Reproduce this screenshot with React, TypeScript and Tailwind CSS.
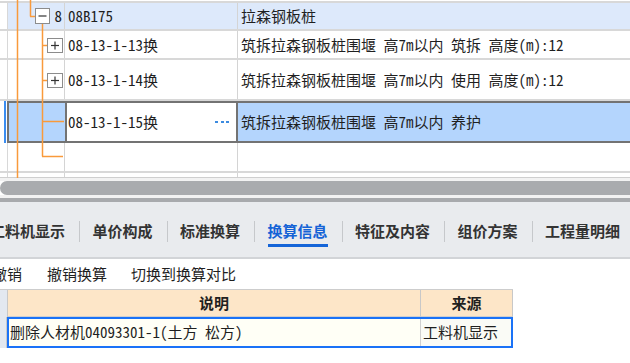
const cjk = "font-['Noto_Sans_CJK_SC','Noto_Sans',sans-serif] [font-feature-settings:'hwid']";

const tabs = ["工料机显示", "单价构成", "标准换算", "换算信息", "特征及内容", "组价方案", "工程量明细"];

function TreeLines() {
  const o = "#f99a3b";
  return (
    <svg className="absolute left-0 top-0 pointer-events-none" width="66" height="178" viewBox="0 0 66 178">
      <g stroke={o} strokeWidth="1.5" fill="none">
        <line x1="17.5" y1="0" x2="17.5" y2="178" />
        <line x1="30.5" y1="0" x2="30.5" y2="16.5" />
        <line x1="30" y1="16.5" x2="35" y2="16.5" />
        <line x1="42.5" y1="24" x2="42.5" y2="156.5" />
        <line x1="42" y1="45.5" x2="47" y2="45.5" />
        <line x1="42" y1="80.5" x2="47" y2="80.5" />
        <line x1="42" y1="121.5" x2="64" y2="121.5" />
        <line x1="42" y1="156.5" x2="63" y2="156.5" />
      </g>
      <g stroke="#8c8c8c" strokeWidth="1" fill="#fff">
        <rect x="35.5" y="8.5" width="14" height="15" />
        <rect x="47.5" y="38.5" width="15" height="14" />
        <rect x="47.5" y="73.5" width="15" height="14" />
      </g>
      <g stroke="#333" strokeWidth="1.2">
        <line x1="38.5" y1="16" x2="46.5" y2="16" />
        <line x1="51" y1="45.5" x2="59" y2="45.5" />
        <line x1="55" y1="41.5" x2="55" y2="49.5" />
        <line x1="51" y1="80.5" x2="59" y2="80.5" />
        <line x1="55" y1="76.5" x2="55" y2="84.5" />
      </g>
    </svg>
  );
}

function Row({ h, bg, lvl, code, name }: { h: string; bg: string; lvl?: string; code?: string; name?: string }) {
  return (
    <div className={`flex ${h} ${bg} border-b-2 border-[#d8d8d8]`}>
      <div className="w-[8px] bg-white border-r border-[#d8d8d8]" />
      <div className="w-[57px] border-r border-[#d4d4d4] flex items-center justify-end pr-[2px]">{lvl}</div>
      <div className="w-[173px] border-r border-[#d4d4d4] flex items-center pl-[3px]">{code}</div>
      <div className="flex-1 flex items-center pl-[3px] whitespace-nowrap">{name}</div>
    </div>
  );
}

export default function App() {
  return (
    <div className={`w-[630px] h-[363px] overflow-hidden bg-white text-[#1f1f1f] ${cjk}`}>
      {/* 上方清单树 */}
      <div className="relative text-[15px] leading-[20px]">
        <div className="h-[3px] border-b-2 border-[#d8d8d8]" />
        <Row h="h-[28px]" bg="bg-[#dde9fb]" lvl="8" code="08B175" name="拉森钢板桩" />
        <Row h="h-[29px]" bg="bg-white" code="08-13-1-13换" name="筑拆拉森钢板桩围堰 高7m以内 筑拆 高度(m):12" />
        <Row h="h-[41px]" bg="bg-white" code="08-13-1-14换" name="筑拆拉森钢板桩围堰 高7m以内 使用 高度(m):12" />

        {/* 选中行 */}
        <div className="flex h-[42px]">
          <div className="w-[7px] flex justify-end pr-[1px]">
            <div className="w-[2px] bg-[#3a8cf0]" />
          </div>
          <div className="flex-1 flex border-2 border-r-0 border-[#737373]">
            <div className="w-[56px] bg-[#b4d5fd]" />
            <div className="w-[173px] bg-white border-x-2 border-[#737373] flex items-center pl-[1px] pr-[7px] justify-between">
              <span>08-13-1-15换</span>
              <span className="flex gap-[2.5px]">
                <span className="w-[3px] h-[2px] bg-[#3c8be0]" />
                <span className="w-[3px] h-[2px] bg-[#3c8be0]" />
                <span className="w-[3px] h-[2px] bg-[#3c8be0]" />
              </span>
            </div>
            <div className="flex-1 bg-[#b4d5fd] flex items-center pl-[3px] whitespace-nowrap">筑拆拉森钢板桩围堰 高7m以内 养护</div>
          </div>
        </div>

        <Row h="h-[30px]" bg="bg-white" />
        <div className="flex h-[4px]">
          <div className="w-[8px] border-r border-[#d8d8d8]" />
          <div className="w-[57px] border-r border-[#d4d4d4]" />
          <div className="w-[173px] border-r border-[#d4d4d4]" />
        </div>
        <TreeLines />
      </div>

      {/* 横向滚动条 */}
      <div className="h-[4px] bg-[#f2f2f2] border-t border-[#cfcfcf]" />
      <div className="h-[14px] bg-[#a9abae] rounded-l-[7px]" />
      <div className="h-[3px] bg-[#f2f2f2]" />
      <div className="h-[4px] bg-[#a8aaad]" />

      {/* 页签 */}
      <div className="h-[57px] bg-[#e9ebee] border-b-2 border-[#d2d4d7] flex items-start pt-[19px] text-[15px] leading-[20px] font-semibold text-[#333] whitespace-nowrap">
        {tabs.map((t, i) => (
          <div key={t} className={`flex items-start ${i === 0 ? "ml-[-10px]" : ""}`}>
            {i > 0 && <div className="w-px h-[21px] bg-[#c6c8cb] ml-[14px] mr-[12.5px]" />}
            <div className="flex flex-col">
              <span className={t === "换算信息" ? "text-[#1563d6]" : ""}>{t}</span>
              <div className={`h-[3px] mt-[3px] ${t === "换算信息" ? "bg-[#1565d8]" : ""}`} />
            </div>
          </div>
        ))}
      </div>

      {/* 工具栏 */}
      <div className="h-[30px] flex items-center text-[15px] whitespace-nowrap">
        <span className="ml-[-8px]">撤销</span>
        <span className="ml-[25px]">撤销换算</span>
        <span className="ml-[24px]">切换到换算对比</span>
      </div>

      {/* 换算信息表 */}
      <div className="w-[513px] text-[15px]">
        <div className="flex h-[28px] border-t border-[#cdcdcd]">
          <div className="w-[8px] bg-[#e3e8f0] border-r border-[#c8c8c8]" />
          <div className="w-[413px] bg-[#fde6c8] border-r border-[#c8c8c8] border-b border-b-[#cfcfcf] flex items-center justify-center font-bold">说明</div>
          <div className="flex-1 bg-[#fde6c8] border-r border-[#c8c8c8] border-b border-b-[#cfcfcf] flex items-center justify-center font-bold">来源</div>
        </div>
        <div className="flex h-[31px]">
          <div className="w-[7px] bg-[#e3e8f0] border-r border-[#c8c8c8]" />
          <div className="flex-1 flex border-2 border-[#1a72f7] bg-[#fffff6]">
            <div className="w-[412px] border-r border-[#d0d0d0] flex items-center pl-[1px] whitespace-nowrap">删除人材机04093301-1(土方 松方)</div>
            <div className="flex-1 flex items-center pl-[2px] bg-[#fafbf6]">工料机显示</div>
          </div>
        </div>
      </div>
    </div>
  );
}
